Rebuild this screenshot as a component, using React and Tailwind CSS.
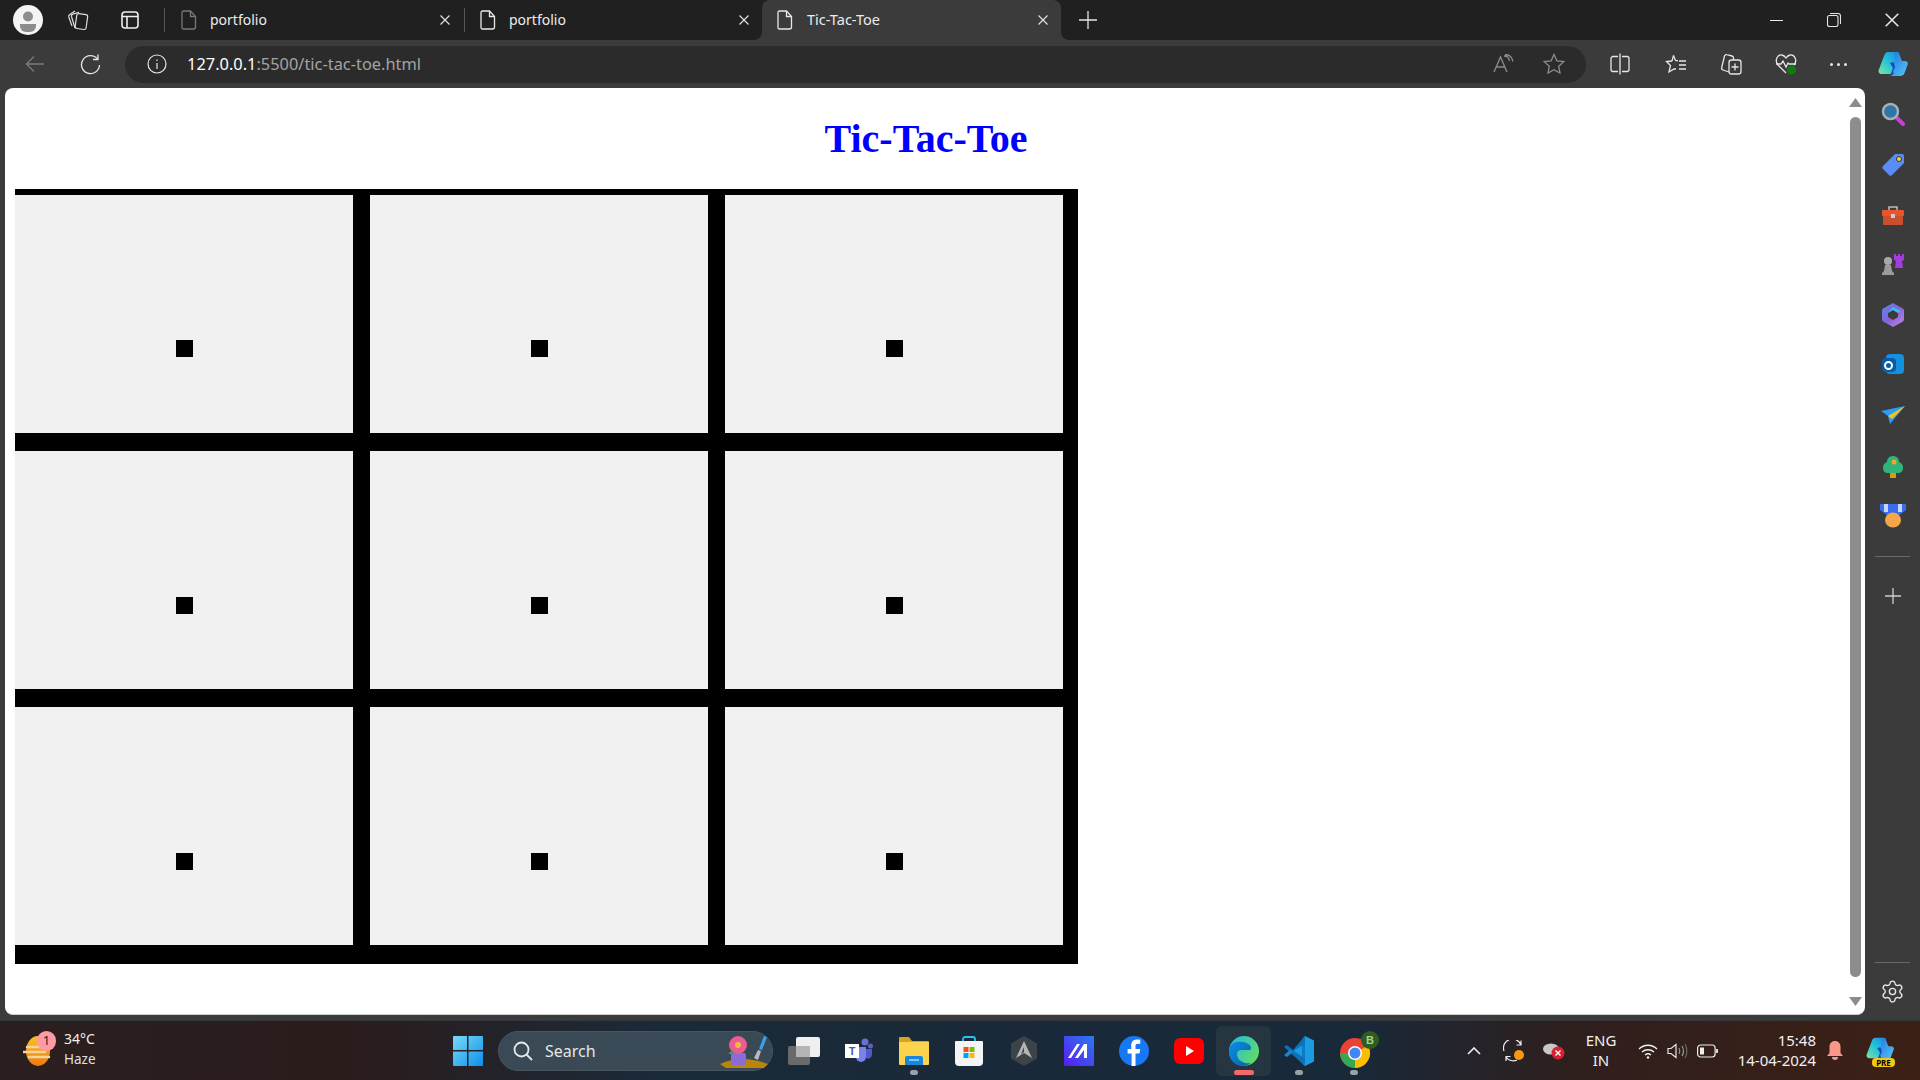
import React from "react";
import { Settings } from "lucide-react";

const FONT = "font-['Noto_Sans','Open_Sans',sans-serif]";

const FileIcon = ({ dim }) => (
  <svg width="16" height="20" viewBox="0 0 16 20" fill="none" stroke={dim ? "#777" : "#e8e8e8"} strokeWidth="1.3">
    <path d="M2.5 1h7l5 5.5V17a2 2 0 0 1-2 2h-10a1.5 1.5 0 0 1-1.5-1.5V2.5A1.5 1.5 0 0 1 2.5 1z" />
    <path d="M9.5 1v5.5h5" />
  </svg>
);

const CloseX = ({ size = 10, color = "#e6e6e6" }) => (
  <svg width={size} height={size} viewBox="0 0 10 10" stroke={color} strokeWidth="1.1">
    <path d="M0.5 0.5l9 9M9.5 0.5l-9 9" />
  </svg>
);

const TabStrip = () => (
  <div className="flex h-10 bg-[#3b3b3b] shrink-0">
    <div className="flex items-center w-[762px] bg-[#202020] rounded-br-lg">
      <svg width="30" height="30" viewBox="0 0 30 30" className="ml-[13px]">
        <circle cx="15" cy="15" r="15" fill="#f4f4f4" />
        <circle cx="15" cy="11.5" r="5" fill="#8d8d8d" />
        <path d="M7 19h16v2a6 6 0 0 1-6 6h-4a6 6 0 0 1-6-6z" fill="#8d8d8d" />
      </svg>
      <svg width="22" height="22" viewBox="0 0 22 22" fill="none" stroke="#ddd" strokeWidth="1.2" className="ml-[24px]">
        <rect x="9" y="5" width="11" height="15" rx="2" transform="rotate(8 14 12)" />
        <path d="M8 19L4.5 7.5a2 2 0 0 1 1.4-2.4L12 3.2" />
        <path d="M5 17L1.8 8a2 2 0 0 1 1-2.4L8 2" />
      </svg>
      <svg width="20" height="20" viewBox="0 0 20 20" fill="none" stroke="#eee" strokeWidth="1.6" className="ml-[31px]">
        <rect x="2" y="2" width="16" height="16" rx="3" />
        <path d="M2 6.5h16M7 6.5V18" />
      </svg>
      <span className="w-px h-[24px] bg-[#555] ml-[24px]" />
      <div className="ml-[16px]"><FileIcon dim /></div>
      <span className="text-[14px] text-[#ececec] ml-[13px] w-[230px] -mt-[2px]">portfolio</span>
      <CloseX />
      <span className="w-px h-[24px] bg-[#555] ml-[14px]" />
      <div className="ml-[15px]"><FileIcon /></div>
      <span className="text-[14px] text-[#ececec] ml-[13px] w-[230px] -mt-[2px]">portfolio</span>
      <CloseX />
    </div>
    <div className="w-[299px] bg-[#202020]">
      <div className="h-full bg-[#3b3b3b] rounded-t-lg flex items-center">
        <div className="ml-[15px]"><FileIcon /></div>
        <span className="text-[14.5px] text-[#ececec] ml-[14px] w-[231px] -mt-[1px]">Tic-Tac-Toe</span>
        <CloseX />
      </div>
    </div>
    <div className="flex-1 bg-[#202020] rounded-bl-lg flex items-center">
      <svg width="18" height="18" viewBox="0 0 18 18" stroke="#e6e6e6" strokeWidth="1.3" className="ml-[18px]">
        <path d="M9 0v18M0 9h18" />
      </svg>
      <div className="ml-auto flex items-center">
        <span className="w-[13px] h-px bg-[#eee]" />
        <svg width="14" height="14" viewBox="0 0 14 14" fill="none" stroke="#e6e6e6" strokeWidth="1.1" className="ml-[44px]">
          <rect x="0.5" y="2.5" width="10.5" height="11" rx="2" />
          <path d="M3 0.5h8a2.5 2.5 0 0 1 2.5 2.5v8" />
        </svg>
        <div className="ml-[44px] mr-[21px]"><CloseX size={14} /></div>
      </div>
    </div>
  </div>
);

const CopilotLogo = ({ size = 30 }) => (
  <svg width={size} height={size} viewBox="0 0 30 30">
    <defs>
      <linearGradient id="cpA" x1="0" y1="1" x2="1" y2="0">
        <stop offset="0" stopColor="#7fe3a0" />
        <stop offset="0.5" stopColor="#25c3d6" />
        <stop offset="1" stopColor="#1a86e8" />
      </linearGradient>
      <linearGradient id="cpB" x1="0" y1="0" x2="1" y2="1">
        <stop offset="0" stopColor="#1f6fe0" />
        <stop offset="1" stopColor="#56c8f6" />
      </linearGradient>
    </defs>
    <path d="M10 3h9c2 0 2.800 1.300 2.200 3.200L16 22c-.7 2-2 3-4 3H4c-3 0-4-2-3.200-4.300L6 7c.7-2.300 2-4 4-4z" fill="url(#cpA)" />
    <path d="M17 3c2.300 0 4 1 4.600 3L24 12h3c2 0 3.300 1.500 2.700 3.500L26.500 24c-.7 2.300-2.500 3-4.500 3H11c2.500 0 4-1 4.700-3z" fill="url(#cpB)" />
    <path d="M12 14l3.500-1 1.500 5-2.500 6c-.6 2-2 3-4 3 1.500-.5 2.300-2 2.800-3.500L15 19z" fill="#1347c4" />
  </svg>
);

const ToolBar = () => (
  <div className="flex items-center h-12 bg-[#3b3b3b] shrink-0">
    <svg width="20" height="18" viewBox="0 0 20 18" fill="none" stroke="#7c7c7c" strokeWidth="1.3" className="ml-[25px]">
      <path d="M19 9H1.5M9 1.5L1.5 9 9 16.5" />
    </svg>
    <svg width="21" height="21" viewBox="0 0 21 21" fill="none" stroke="#e6e6e6" strokeWidth="1.3" className="ml-[35px]">
      <path d="M17.5 5A9 9 0 1 0 19.5 11" />
      <path d="M18 0.5V5.5H13" />
    </svg>
    <div className="ml-[24px] w-[1461px] h-[37px] bg-[#2b2b2b] rounded-full flex items-center">
      <svg width="20" height="20" viewBox="0 0 20 20" fill="none" stroke="#e6e6e6" strokeWidth="1.2" className="ml-[22px]">
        <circle cx="10" cy="10" r="9" />
        <path d="M10 9v6M10 5.5V7" />
      </svg>
      <span className="ml-[20px] text-[16.4px] text-[#a3a3a3] whitespace-nowrap">
        <span className="text-white">127.0.0.1</span>:5500/tic-tac-toe.html
      </span>
      <svg width="22" height="20" viewBox="0 0 22 20" fill="none" stroke="#8c8c8c" strokeWidth="1.3" className="ml-auto">
        <path d="M1 18L7.5 3 14 18M3.5 13h8" />
        <path d="M11 2c3 0 5 1.500 5.500 5M12 0.500c4 0 7 2.500 8 7" />
      </svg>
      <svg width="22" height="22" viewBox="0 0 22 22" fill="none" stroke="#8c8c8c" strokeWidth="1.3" className="ml-[28px] mr-[21px]">
        <path d="M11 1.5l2.900 6.300 6.800.8-5 4.700 1.300 6.800-6-3.400-6 3.400 1.300-6.800-5-4.700 6.800-.8z" />
      </svg>
    </div>
    <svg width="20" height="22" viewBox="0 0 20 22" fill="none" stroke="#e6e6e6" strokeWidth="1.3" className="ml-[24px]">
      <path d="M8 3.5H3a2 2 0 0 0-2 2v11a2 2 0 0 0 2 2h5M12 3.5h5a2 2 0 0 1 2 2v11a2 2 0 0 1-2 2h-5M10 0.500v21" />
    </svg>
    <svg width="22" height="20" viewBox="0 0 22 20" fill="none" stroke="#e6e6e6" strokeWidth="1.3" className="ml-[35px]">
      <path d="M8.5 1.5l2 5 2.500.3M7 7l-5.500.5 4 4L4 18l5-3h2" />
      <path d="M8.5 1.5L7 7M14 7h7M14 11h7M14 15h7" />
    </svg>
    <svg width="22" height="22" viewBox="0 0 22 22" fill="none" stroke="#e6e6e6" strokeWidth="1.3" className="ml-[33px]">
      <path d="M9 19L3 17a2 2 0 0 1-1.300-2.500L4.500 3A2 2 0 0 1 7 1.700L12 3a2 2 0 0 1 1.500 2v2" />
      <rect x="9" y="7" width="12" height="14" rx="2.5" />
      <path d="M15 10.5v7M11.5 14h7" />
    </svg>
    <svg width="22" height="22" viewBox="0 0 22 22" fill="none" stroke="#e6e6e6" strokeWidth="1.3" className="ml-[33px]">
      <path d="M11 20L3 12C-1 7 3 1 7 2c2 .4 3 1.500 4 3 1-1.500 2-2.600 4-3 4-1 8 5 4 10" />
      <path d="M1 11h5l2-3 3 6 2-4 1 1h7" />
      <circle cx="16.5" cy="17" r="4.5" fill="#107c10" stroke="none" />
    </svg>
    <div className="flex gap-[4px] ml-[33px]">
      <span className="w-[3px] h-[3px] rounded-full bg-[#e6e6e6]" />
      <span className="w-[3px] h-[3px] rounded-full bg-[#e6e6e6]" />
      <span className="w-[3px] h-[3px] rounded-full bg-[#e6e6e6]" />
    </div>
    <div className="ml-[31px]"><CopilotLogo /></div>
  </div>
);

const Cell = ({ first }) => (
  <div className={`h-[238px] bg-[#f0f0f0] flex justify-center ${first ? "pt-[145px]" : "pt-[146px]"}`}>
    <div className="w-[17px] h-[17px] ml-[1px] bg-black" />
  </div>
);

const Board = () => (
  <div className="ml-[10px] w-[1063px] bg-black pt-[6px] pr-[15px] pb-[19px] grid grid-cols-[repeat(3,338px)] gap-x-[17px] gap-y-[18px]">
    {Array.from({ length: 9 }).map((_, i) => <Cell key={i} first={i < 3} />)}
  </div>
);

const Scrollbar = () => (
  <div className="w-[18px] flex flex-col items-center pr-[1px]">
    <svg width="13" height="9" viewBox="0 0 13 9" fill="#8d8d8d" className="mt-[10px]"><path d="M6.5 0l6.500 9H0z" /></svg>
    <div className="w-[11px] h-[860px] mt-[10px] bg-[#8d8d8d] rounded-full" />
    <svg width="13" height="9" viewBox="0 0 13 9" fill="#8d8d8d" className="mt-[20px]"><path d="M0 0h13L6.500 9z" /></svg>
  </div>
);

const Page = () => (
  <div className="w-[1860px] ml-[5px] bg-white rounded-lg border-b border-[#cfcfcf] flex">
    <div className="flex-1 font-['Liberation_Serif',serif]">
      <h1 className="text-center text-[40px] leading-[46px] font-bold text-[#0000ff] pt-[28px] pb-[27px]">Tic-Tac-Toe</h1>
      <Board />
    </div>
    <Scrollbar />
  </div>
);

const SideBar = () => (
  <div className="flex-1 flex flex-col items-center">
    <svg width="24" height="24" viewBox="0 0 24 24" className="mt-[14px]">
      <path d="M15 15l7 7" stroke="#c83fd6" strokeWidth="4" strokeLinecap="round" />
      <circle cx="9.5" cy="9.5" r="7.5" fill="#2f75a8" stroke="#a9b0b5" strokeWidth="2.5" />
    </svg>
    <svg width="24" height="24" viewBox="0 0 24 24" className="mt-[27px]">
      <path d="M14 1h7a2 2 0 0 1 2 2v7L11 22a2 2 0 0 1-3 0L2 16a2 2 0 0 1 0-3z" fill="#5b8bf5" />
      <circle cx="18" cy="6" r="2.5" fill="#f5d33b" stroke="#333" />
    </svg>
    <svg width="24" height="22" viewBox="0 0 24 22" className="mt-[28px]">
      <path d="M8 5V2h8v3" fill="none" stroke="#bbb" strokeWidth="1.5" />
      <rect x="1" y="5" width="22" height="6" rx="1" fill="#e8552d" />
      <rect x="2" y="11" width="20" height="9" rx="1" fill="#c9502b" />
      <rect x="10" y="9" width="4" height="4" fill="#ccc" />
    </svg>
    <svg width="24" height="24" viewBox="0 0 24 24" className="mt-[25px]">
      <path d="M13 2h2v2h2V2h2v2h2V2h2v6l-2 1 1 7H14l1-7-2-1z" fill="#a43de0" />
      <circle cx="7" cy="9" r="4" fill="#a8a8a8" />
      <path d="M4 13h6l1 6 2 2v2H1v-2l2-2z" fill="#9a9a9a" />
    </svg>
    <svg width="22" height="24" viewBox="0 0 22 24" className="mt-[27px]">
      <defs>
        <linearGradient id="m365" x1="0" y1="0" x2="1" y2="1">
          <stop offset="0" stopColor="#4f8cf0" />
          <stop offset="0.5" stopColor="#8a5fd8" />
          <stop offset="1" stopColor="#c08de8" />
        </linearGradient>
      </defs>
      <path d="M11 0l9 5a3 3 0 0 1 2 3v8a3 3 0 0 1-2 3l-9 5-9-5a3 3 0 0 1-2-3V8a3 3 0 0 1 2-3z" fill="url(#m365)" />
      <path d="M11 7l5 3v4l-5 3-5-3v-4z" fill="#3b3b3b" />
      <path d="M6 10L11 4l8 4-3 2-5-3z" fill="#39c0e8" />
    </svg>
    <div className="mt-[27px] w-[22px] h-[24px] relative">
      <div className="w-[18px] h-[20px] bg-[#1490df] rounded-sm ml-[4px]" />
      <div className="absolute left-0 top-[4px] w-[14px] h-[14px] bg-[#0a5ca8] rounded-sm flex items-center justify-center">
        <span className="w-[9px] h-[9px] rounded-full border-2 border-white" />
      </div>
    </div>
    <svg width="24" height="18" viewBox="0 0 24 18" className="mt-[28px]">
      <path d="M0 5L24 0 9 18l-2-8z" fill="#2a9df4" />
      <path d="M7 10L24 0 11 13z" fill="#f8c21c" />
    </svg>
    <svg width="20" height="22" viewBox="0 0 20 22" className="mt-[32px]">
      <rect x="7" y="15" width="6" height="7" fill="#d99a0a" />
      <path d="M10 0c4 0 6 3 6 6 3 1 4 3 4 6 0 3-2 5-5 5H5c-3 0-5-2-5-5 0-3 1-5 4-6 0-3 2-6 6-6z" fill="#2fb57c" />
      <circle cx="11" cy="6" r="2.5" fill="#f0a818" />
    </svg>
    <svg width="26" height="24" viewBox="0 0 26 24" className="mt-[26px]">
      <path d="M0 0h26v6l-8 6H8L0 6z" fill="#3a6cf0" />
      <path d="M4 0h4v8H4zM18 0h4v8h-4z" fill="#c5d6fa" />
      <ellipse cx="13" cy="16" rx="8" ry="7.5" fill="#f5a54a" />
    </svg>
    <span className="w-[35px] h-px bg-[#6a6a6a] mt-[28px]" />
    <svg width="16" height="16" viewBox="0 0 16 16" stroke="#cfcfcf" strokeWidth="1.3" className="mt-[31px]">
      <path d="M8 0v16M0 8h16" />
    </svg>
    <span className="w-[35px] h-px bg-[#6a6a6a] mt-auto" />
    <Settings size={25} color="#e6e6e6" strokeWidth={1.3} className="mt-[16px] mb-[11px]" />
  </div>
);

const WeatherIcon = () => (
  <div className="relative w-[34px] h-[40px] flex items-center ml-[23px]">
    <svg width="30" height="30" viewBox="0 0 30 30">
      <defs>
        <linearGradient id="sun" x1="0" y1="0" x2="0" y2="1">
          <stop offset="0" stopColor="#fbc02d" />
          <stop offset="1" stopColor="#ef7a0b" />
        </linearGradient>
      </defs>
      <ellipse cx="15" cy="15" rx="12" ry="15" fill="url(#sun)" />
      <path d="M4 11h24M0 16h22M6 21h20" stroke="#f1d59a" strokeWidth="2.5" strokeLinecap="round" />
    </svg>
    <span className="absolute left-[14px] top-[0px] w-[19px] h-[20px] rounded-full bg-[#ff9aa5] text-[#222] text-[13px] flex items-center justify-center">1</span>
  </div>
);

const WinLogo = () => (
  <svg width="30" height="30" viewBox="0 0 30 30">
    <defs>
      <linearGradient id="win" x1="0" y1="0" x2="1" y2="1">
        <stop offset="0" stopColor="#78dcf8" />
        <stop offset="1" stopColor="#0c8fe8" />
      </linearGradient>
    </defs>
    <path d="M1 0h13v14H0V1a1 1 0 0 1 1-1zM15.500 0H29a1 1 0 0 1 1 1v13H15.500zM0 15.500h14V30H1a1 1 0 0 1-1-1zM15.500 15.500H30V29a1 1 0 0 1-1 1H15.500z" fill="url(#win)" />
  </svg>
);

const SearchPill = () => (
  <div className="ml-[15px] w-[275px] h-10 rounded-full bg-[#394955] flex items-center border border-[#46555f]">
    <svg width="20" height="20" viewBox="0 0 20 20" fill="none" stroke="#e8e8e8" strokeWidth="1.8" className="ml-[14px]">
      <circle cx="8.5" cy="8.5" r="7" />
      <path d="M13.5 13.5L19 19" />
    </svg>
    <span className="ml-[12px] text-[16px] text-[#e6e6e6]">Search</span>
    <svg width="52" height="34" viewBox="0 0 52 34" className="ml-auto mr-[2px]">
      <path d="M2 30q22-10 48 0l-4 4H8z" fill="#b8860b" />
      <rect x="13" y="19" width="15" height="12" rx="2" fill="#8a6bd8" />
      <circle cx="20" cy="11" r="9" fill="#ea5d92" />
      <circle cx="20" cy="11" r="3" fill="#f5b942" />
      <path d="M10 20l4-4 3 4z" fill="#45a049" />
      <path d="M36 24l4-8 3 1-3 9z" fill="#bbb" />
      <path d="M41 15l5-13 3 1-5 13z" fill="#3aa0f0" />
    </svg>
  </div>
);

const AppSlot = ({ children, mark, active }) => (
  <div className={`relative w-[55px] h-[50px] flex items-center justify-center rounded-md ${active ? "bg-[#263641]" : ""}`}>
    {children}
    {mark && <span className={`absolute bottom-[1px] h-[5px] rounded-full ${active ? "w-[20px] bg-[#f46a6a]" : "w-[8px] bg-[#9aa2a8]"}`} />}
  </div>
);

const TaskApps = () => (
  <div className="flex items-center ml-[3px]">
    <AppSlot>
      <svg width="32" height="28" viewBox="0 0 32 28">
        <rect x="0" y="9" width="22" height="19" rx="2" fill="#6a6a6a" />
        <rect x="8" y="0" width="24" height="20" rx="2" fill="#efefef" />
        <rect x="8" y="9" width="14" height="11" fill="#b5b5b5" />
      </svg>
    </AppSlot>
    <AppSlot>
      <svg width="28" height="26" viewBox="0 0 28 26">
        <circle cx="20" cy="4" r="3.5" fill="#6a6fd0" />
        <circle cx="25.5" cy="8" r="2.5" fill="#5b5fc7" />
        <path d="M11 9h10v10a5 5 0 0 1-10 0z" fill="#7b83eb" />
        <path d="M21 11h6v6a4 4 0 0 1-6 3z" fill="#5059c9" />
        <rect x="0" y="6" width="14" height="14" fill="#fff" />
        <text x="7" y="17" textAnchor="middle" fontSize="11" fontWeight="700" fill="#4b53bc" fontFamily="Liberation Sans">T</text>
      </svg>
    </AppSlot>
    <AppSlot mark>
      <svg width="30" height="28" viewBox="0 0 30 28">
        <path d="M0 1a1 1 0 0 1 1-1h9l3 4h16a1 1 0 0 1 1 1v3H0z" fill="#d9a520" />
        <path d="M0 5h30v22a1 1 0 0 1-1 1H1a1 1 0 0 1-1-1z" fill="#fbd34d" />
        <path d="M6 28v-7a2 2 0 0 1 2-2h14a2 2 0 0 1 2 2v7z" fill="#1a86d9" />
        <rect x="10" y="22" width="10" height="2" fill="#7cc5f5" />
      </svg>
    </AppSlot>
    <AppSlot>
      <svg width="28" height="30" viewBox="0 0 28 30">
        <path d="M8 6V3a2 2 0 0 1 2-2h8a2 2 0 0 1 2 2v3" fill="none" stroke="#2dc1f0" strokeWidth="1.8" />
        <path d="M1 5h26a1 1 0 0 1 1 1v20a4 4 0 0 1-4 4H4a4 4 0 0 1-4-4V6a1 1 0 0 1 1-1z" fill="#f4f4f4" />
        <rect x="8.5" y="11" width="5" height="5" fill="#f25022" />
        <rect x="14.5" y="11" width="5" height="5" fill="#7fba00" />
        <rect x="8.5" y="17" width="5" height="5" fill="#00a4ef" />
        <rect x="14.5" y="17" width="5" height="5" fill="#ffb900" />
      </svg>
    </AppSlot>
    <AppSlot>
      <svg width="26" height="30" viewBox="0 0 26 30">
        <path d="M13 0l13 7.500v15L13 30 0 22.500v-15z" fill="#3d4448" />
        <path d="M13 5L5 22l8-5 8 5z" fill="#b5b5b5" />
        <path d="M13 11l-3 7 3-2z" fill="#3d4448" />
      </svg>
    </AppSlot>
    <AppSlot>
      <svg width="30" height="30" viewBox="0 0 30 30">
        <defs>
          <linearGradient id="ma" x1="0" y1="1" x2="1" y2="0">
            <stop offset="0" stopColor="#5a1cf0" />
            <stop offset="1" stopColor="#2a7af0" />
          </linearGradient>
        </defs>
        <rect width="30" height="30" fill="url(#ma)" />
        <path d="M4 22L13 8h3L7 22zM11 22L20 8h3v14h-3v-8l-6 8z" fill="#fff" />
      </svg>
    </AppSlot>
    <AppSlot>
      <svg width="30" height="30" viewBox="0 0 30 30">
        <circle cx="15" cy="15" r="15" fill="#1877f2" />
        <path d="M16.5 30V17.500h4l.7-4.500h-4.700v-3c0-1.400.6-2.300 2.400-2.300h2.400V3.700c-1-.2-2.200-.3-3.300-.3-3.500 0-5.800 2.100-5.800 6V13H8.600v4.500h4V30z" fill="#fff" />
      </svg>
    </AppSlot>
    <AppSlot>
      <svg width="30" height="26" viewBox="0 0 30 26">
        <rect width="30" height="26" rx="6" fill="#f00" />
        <path d="M12 8l8 5-8 5z" fill="#fff" />
      </svg>
    </AppSlot>
    <AppSlot mark active>
      <svg width="30" height="30" viewBox="0 0 30 30">
        <defs>
          <linearGradient id="edgeA" x1="0" y1="0" x2="1" y2="1">
            <stop offset="0" stopColor="#0c8fe0" />
            <stop offset="1" stopColor="#0b5fb0" />
          </linearGradient>
          <linearGradient id="edgeB" x1="0" y1="0" x2="1" y2="0.6">
            <stop offset="0" stopColor="#1fb6e8" />
            <stop offset="1" stopColor="#5fdc6a" />
          </linearGradient>
        </defs>
        <circle cx="15" cy="15" r="15" fill="url(#edgeB)" />
        <path d="M0 15C1 6 8 5 14 6c7 1 10 6 7 8H12c-4 0-5 4-3 8 2 4 8 6 13 5-3 2-5 3-8 3C5 30 0 23 0 15z" fill="url(#edgeA)" />
      </svg>
    </AppSlot>
    <AppSlot mark>
      <svg width="30" height="30" viewBox="0 0 30 30">
        <path d="M21 0l9 4.500v21L21 30 8 17z" fill="#1a9de0" />
        <path d="M21 0v30l-3-2V3z" fill="#0d7bc4" />
        <path d="M21 7.500L9.500 15 21 22.500V30L0 11l3-2 6 5L21 0z" fill="#0f6fb8" />
        <path d="M0 19l3 2 6-5-3-2z" fill="#1a86d0" />
      </svg>
    </AppSlot>
    <AppSlot mark>
      <svg width="40" height="40" viewBox="0 0 40 40" className="ml-[12px]">
        <circle cx="15" cy="22" r="15" fill="#ea4335" />
        <path d="M15 22L2 29.500A15 15 0 0 0 15 37z" fill="#34a853" />
        <path d="M15 22l13-7.500A15 15 0 0 1 15 37z" fill="#fbbc04" />
        <path d="M0 22a15 15 0 0 0 2 7.500L15 22z" fill="#34a853" />
        <circle cx="15" cy="22" r="7" fill="#fff" />
        <circle cx="15" cy="22" r="5.5" fill="#4285f4" />
        <circle cx="30" cy="9" r="9" fill="#2f5d1f" />
        <text x="30" y="13" textAnchor="middle" fontSize="11" fontWeight="700" fill="#a8d08d" fontFamily="Liberation Sans">B</text>
      </svg>
    </AppSlot>
  </div>
);

const Tray = () => (
  <div className="flex items-center ml-auto h-full">
    <svg width="14" height="8" viewBox="0 0 14 8" fill="none" stroke="#eee" strokeWidth="1.6">
      <path d="M1 7l6-6 6 6" />
    </svg>
    <svg width="22" height="22" viewBox="0 0 22 22" fill="none" stroke="#eee" strokeWidth="1.2" className="ml-[22px]">
      <path d="M1 11A9 9 0 0 1 18 5M18 0.500V5h-4.500M14 20a9 9 0 0 1-11-3M3 21v-4.500h4.500" />
      <circle cx="16" cy="15" r="5" fill="#f59a0e" stroke="none" />
    </svg>
    <svg width="22" height="18" viewBox="0 0 22 18" className="ml-[18px]">
      <ellipse cx="8" cy="7" rx="8" ry="5.5" fill="#c8c8c8" />
      <circle cx="15" cy="11" r="6.5" fill="#d92030" />
      <path d="M12.500 8.500l5 5M17.500 8.500l-5 5" stroke="#fff" strokeWidth="1.4" />
    </svg>
    <div className="ml-[18px] w-[36px] flex flex-col items-center text-[15px] leading-[20px] text-[#f0f0f0] -mt-[2px]">
      <span>ENG</span>
      <span>IN</span>
    </div>
    <svg width="20" height="16" viewBox="0 0 20 16" fill="none" stroke="#f0f0f0" strokeWidth="1.3" className="ml-[19px]">
      <path d="M1 6c5-5 13-5 18 0M4 9c3.500-3 8.500-3 12 0M7 12c1.800-1.500 4.200-1.500 6 0" />
      <circle cx="10" cy="14.5" r="1.2" fill="#f0f0f0" stroke="none" />
    </svg>
    <svg width="21" height="16" viewBox="0 0 21 16" fill="none" stroke="#e8e8e8" strokeWidth="1.2" className="ml-[9px]">
      <path d="M1 5.500h3L9 1.500v13l-5-4H1z" />
      <path d="M12 5c1 1.800 1 4.200 0 6M15 3c1.800 3 1.800 7 0 10" stroke="#9a9a9a" />
      <path d="M18 1c2.500 4 2.500 10 0 14" stroke="#6a6a6a" />
    </svg>
    <svg width="21" height="14" viewBox="0 0 21 14" fill="none" stroke="#eee" strokeWidth="1.2" className="ml-[9px]">
      <rect x="0.6" y="1" width="17.5" height="12" rx="3" />
      <rect x="3" y="3.5" width="4" height="7" fill="#eee" stroke="none" />
      <path d="M20 5v4" strokeWidth="1.8" />
    </svg>
    <div className="ml-[17px] w-[81px] flex flex-col items-end text-[15px] leading-[20px] text-[#f0f0f0] whitespace-nowrap -mt-[2px]">
      <span>15:48</span>
      <span>14-04-2024</span>
    </div>
    <svg width="16" height="20" viewBox="0 0 16 20" fill="#f8988a" className="ml-[11px]">
      <path d="M8 0c3.500 0 5.500 2.500 5.500 6v6l2.500 3H0l2.500-3V6C2.500 2.500 4.500 0 8 0z" />
      <path d="M5 16h6a3 3 0 0 1-6 0z" />
    </svg>
    <div className="relative ml-[23px] mr-[24px] w-[30px] h-[32px]">
      <CopilotLogo size={28} />
      <span className="absolute left-[6px] bottom-[0px] w-[23px] h-[9px] rounded-sm bg-[#f5c518] text-[8px] leading-[9px] font-bold text-black text-center">PRE</span>
    </div>
  </div>
);

const TaskBar = () => (
  <div className="h-[60px] shrink-0 flex items-center bg-[linear-gradient(90deg,#2a1f1f_0%,#2b1c1c_18%,#1b2a38_34%,#18293a_70%,#2f1f1d_82%,#3c2016_100%)] border-t border-[#33383c]">
    <WeatherIcon />
    <div className="ml-[7px] w-[50px] flex flex-col text-[14px] leading-[20px] text-[#f0f0f0] -mt-[4px]">
      <span>34°C</span>
      <span className="text-[13.5px] text-[#e0e0e0]">Haze</span>
    </div>
    <div className="ml-[339px]"><WinLogo /></div>
    <SearchPill />
    <TaskApps />
    <Tray />
  </div>
);

export default function App() {
  return (
    <div className={`h-screen w-full flex flex-col overflow-hidden bg-[#3b3b3b] ${FONT}`}>
      <TabStrip />
      <ToolBar />
      <div className="flex flex-1 min-h-0 pb-[5px]">
        <Page />
        <SideBar />
      </div>
      <TaskBar />
    </div>
  );
}
